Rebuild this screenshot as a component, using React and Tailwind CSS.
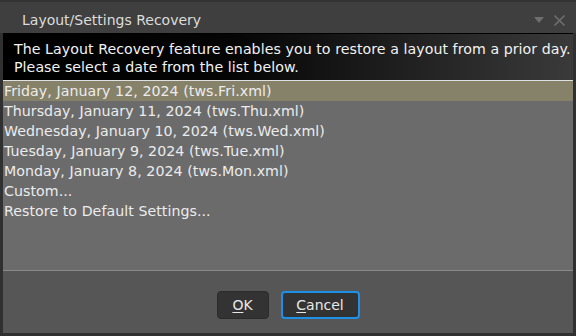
import React from "react";

const items = [
  "Friday, January 12, 2024 (tws.Fri.xml)",
  "Thursday, January 11, 2024 (tws.Thu.xml)",
  "Wednesday, January 10, 2024 (tws.Wed.xml)",
  "Tuesday, January 9, 2024 (tws.Tue.xml)",
  "Monday, January 8, 2024 (tws.Mon.xml)",
  "Custom...",
  "Restore to Default Settings...",
];

export default function App() {
  return (
    <div
      className="w-[576px] h-[336px] flex flex-col bg-[#303030] px-[3px] pb-[3px] overflow-hidden"
      style={{ fontFamily: '"DejaVu Sans", Verdana, sans-serif' }}
    >
      <div className="h-[33px] shrink-0 flex items-center bg-[#3f3f3f] -mx-[3px] pl-[22px] pr-[10px] pt-[5px] border-t-2 border-t-[#333333]">
        <span className="text-[14px] text-[#dcdcdc] flex-1">Layout/Settings Recovery</span>
        <svg width="12" height="12" viewBox="0 0 12 12" className="mr-[8px]">
          <path d="M1 3 L11 3 L6 9 Z" fill="#6e6e6e" />
        </svg>
        <svg width="13" height="13" viewBox="0 0 13 13">
          <path d="M1.5 1.5 L11.5 11.5 M11.5 1.5 L1.5 11.5" stroke="#6e6e6e" strokeWidth="1.6" />
        </svg>
      </div>
      <div className="h-[48px] shrink-0 bg-[linear-gradient(to_right,#000000_0%,#050505_40%,#3a3a3a_100%)] border-t border-black border-b border-b-[#e0e0e0] pl-[11px] pt-[6px] text-[14.2px] tracking-[0.05px] leading-[18px] text-[#f2f2f2] whitespace-nowrap">
        <div>The Layout Recovery feature enables you to restore a layout from a prior day.</div>
        <div>Please select a date from the list below.</div>
      </div>
      <div className="h-[190px] shrink-0 bg-[#6b6b6b] border-b border-[#8a8a8a] text-[14.2px] tracking-[0.05px] text-[#ececec]">
        {items.map((t, i) => (
          <div
            key={t}
            className={
              "h-[20px] leading-[20px] pl-[1px] whitespace-nowrap " + (i === 0 ? "bg-[#86826a]" : "")
            }
          >
            {t}
          </div>
        ))}
      </div>
      <div className="flex-1 bg-[#565656] flex items-start justify-center gap-[12px] pt-[20px]">
        <button className="w-[52px] h-[28px] rounded-[4px] bg-[#333333] border border-[#2b2b2b] text-[14px] text-[#e8e8e8]">
          <span className="underline underline-offset-2">O</span>K
        </button>
        <button className="w-[79px] h-[28px] rounded-[4px] bg-[#333333] border-2 border-[#1e90e8] text-[14px] text-[#e8e8e8]">
          <span className="underline underline-offset-2">C</span>ancel
        </button>
      </div>
    </div>
  );
}
